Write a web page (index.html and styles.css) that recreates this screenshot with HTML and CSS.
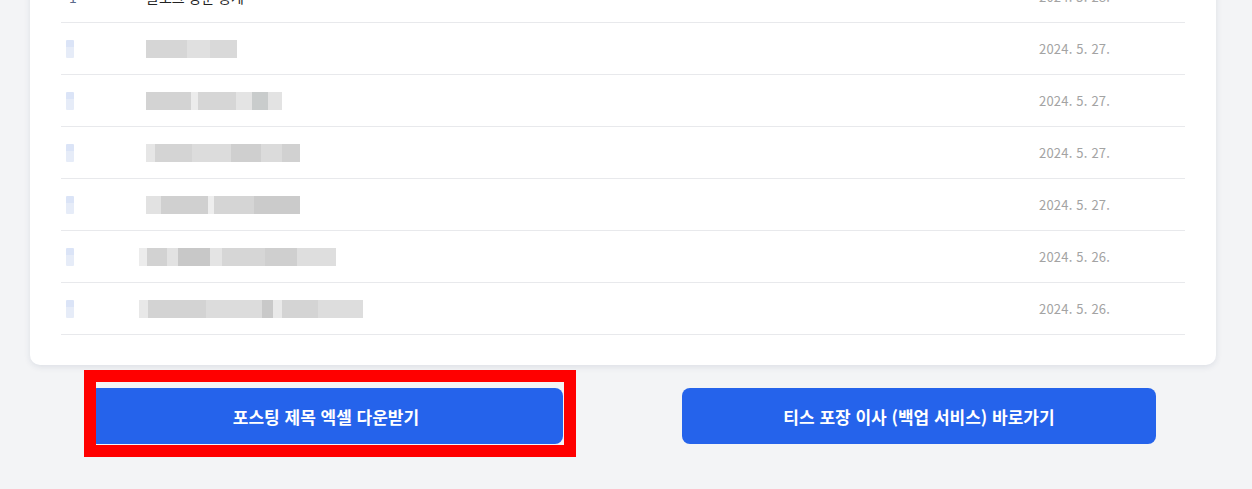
FILE: index.html
```html
<!DOCTYPE html>
<html lang="ko">
<head>
<meta charset="utf-8">
<title>포스팅 목록</title>
<link rel="stylesheet" href="styles.css">
</head>
<body>
<main class="page">
  <section class="card">
    <div class="list">
      <div class="row">
        <span class="num">1</span>
        <span class="title">블로그 방문 통계</span>
        <span class="date">2024. 5. 28.</span>
      </div>
      <div class="row">
        <span class="num-blur"></span>
        <span class="title-blur b1" style="width:91px"></span>
        <span class="date">2024. 5. 27.</span>
      </div>
      <div class="row">
        <span class="num-blur"></span>
        <span class="title-blur b2" style="width:136px"></span>
        <span class="date">2024. 5. 27.</span>
      </div>
      <div class="row">
        <span class="num-blur"></span>
        <span class="title-blur b3" style="width:154px"></span>
        <span class="date">2024. 5. 27.</span>
      </div>
      <div class="row">
        <span class="num-blur"></span>
        <span class="title-blur b4" style="width:154px"></span>
        <span class="date">2024. 5. 27.</span>
      </div>
      <div class="row">
        <span class="num-blur"></span>
        <span class="title-blur b5 shift" style="width:197px"></span>
        <span class="date">2024. 5. 26.</span>
      </div>
      <div class="row">
        <span class="num-blur"></span>
        <span class="title-blur b6 shift" style="width:224px"></span>
        <span class="date">2024. 5. 26.</span>
      </div>
    </div>
  </section>
  <div class="actions">
    <div class="action">
      <a class="btn highlighted" href="#">포스팅 제목 엑셀 다운받기<span class="mark"></span></a>
    </div>
    <div class="action">
      <a class="btn" href="#">티스 포장 이사 (백업 서비스) 바로가기</a>
    </div>
  </div>
</main>
</body>
</html>
```
FILE: styles.css
```css
* { box-sizing: border-box; }
html, body { margin: 0; padding: 0; }
body {
  background: #f3f4f6;
  font-family: "Noto Sans CJK KR", "Noto Sans", sans-serif;
  height: 489px;
  overflow: hidden;
}
.page {
  width: 1186px;
  margin-left: 30px;
}
.card {
  margin-top: -29px;
  background: #ffffff;
  border-radius: 0 0 10px 10px;
  box-shadow: 0 2px 6px rgba(30, 50, 90, 0.10);
  padding: 0 31px 30px;
}
.list {
  display: flex;
  flex-direction: column;
}
.row {
  display: grid;
  grid-template-columns: 85px 1fr 146px;
  align-items: center;
  height: 52px;
  border-bottom: 1px solid #e8e9ec;
}
.num {
  padding-left: 8px;
  font-size: 14px;
  color: #5b6b8c;
}
.title {
  font-size: 14px;
  color: #222;
}
.date {
  font-size: 13px;
  color: #a3a3a3;
  letter-spacing: 0.2px;
  white-space: nowrap;
}
.num-blur {
  display: block;
  width: 8px;
  height: 18px;
  margin-left: 5px;
  background: linear-gradient(180deg, #dbe4f7 0 40%, #e6ecf8 40% 100%);
  border-radius: 1px;
  filter: blur(0.4px);
}
.title-blur {
  display: block;
  height: 18px;
  filter: blur(0.5px);
}
.title-blur.shift { margin-left: -7px; }
.b1 {
  background: linear-gradient(90deg, #d6d6d6 0 45%, #e0e0e0 45% 70%, #d9d9d9 70% 100%);
}
.b2 {
  background: linear-gradient(90deg, #d3d3d3 0 33%, #ececec 33% 38%, #d6d6d6 38% 66%, #e4e4e4 66% 78%, #c9cccc 78% 90%, #e3e3e3 90% 100%);
}
.b3 {
  background: linear-gradient(90deg, #e6e6e6 0 6%, #d4d4d4 6% 30%, #dcdcdc 30% 55%, #cfcfcf 55% 75%, #dbdbdb 75% 88%, #d1d1d1 88% 100%);
}
.b4 {
  background: linear-gradient(90deg, #e2e2e2 0 10%, #d0d0d0 10% 40%, #eeeeee 40% 44%, #d5d5d5 44% 70%, #cbcbcb 70% 100%);
}
.b5 {
  background: linear-gradient(90deg, #ececec 0 4%, #d2d2d2 4% 14%, #e2e2e2 14% 20%, #c8c8c8 20% 36%, #e4e4e4 36% 42%, #d6d6d6 42% 64%, #cfcfcf 64% 80%, #dedede 80% 100%);
}
.b6 {
  background: linear-gradient(90deg, #e8e8e8 0 4%, #d3d3d3 4% 30%, #dcdcdc 30% 55%, #c9c9c9 55% 60%, #e9e9e9 60% 64%, #d4d4d4 64% 80%, #dddddd 80% 100%);
}
.actions {
  display: grid;
  grid-template-columns: 1fr 1fr;
  justify-items: center;
  margin-top: 23px;
}
.action {
  width: 475px;
  padding-right: 1px;
}
.btn {
  position: relative;
  display: flex;
  align-items: center;
  justify-content: center;
  height: 56px;
  border-radius: 8px;
  background: #2563eb;
  color: #ffffff;
  font-size: 17px;
  font-weight: 700;
  text-decoration: none;
}
.mark {
  position: absolute;
  top: -18px;
  left: -5px;
  right: -13px;
  bottom: -13px;
  border: 12px solid #ff0000;
  pointer-events: none;
}
```
